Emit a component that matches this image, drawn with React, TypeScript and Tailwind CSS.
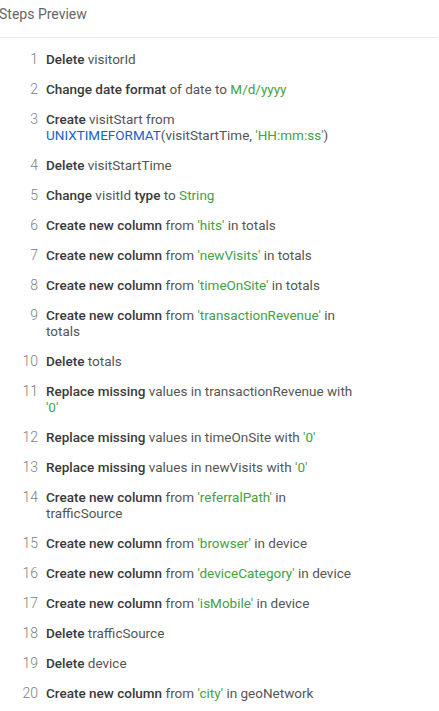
import React from 'react';

// ── Data ─────────────────────────────────────────────────────────────────────

type Part = { t: string; k?: 'op' | 'val' | 'fn' };

const steps: Part[][] = [
  [{ t: 'Delete', k: 'op' }, { t: ' visitorId' }],
  [{ t: 'Change date format', k: 'op' }, { t: ' of date to ' }, { t: 'M/d/yyyy', k: 'val' }],
  [
    { t: 'Create', k: 'op' },
    { t: ' visitStart from ' },
    { t: 'UNIXTIMEFORMAT', k: 'fn' },
    { t: '(visitStartTime, ' },
    { t: "'HH:mm:ss'", k: 'val' },
    { t: ')' },
  ],
  [{ t: 'Delete', k: 'op' }, { t: ' visitStartTime' }],
  [{ t: 'Change', k: 'op' }, { t: ' visitId ' }, { t: 'type', k: 'op' }, { t: ' to ' }, { t: 'String', k: 'val' }],
  [{ t: 'Create new column', k: 'op' }, { t: ' from ' }, { t: "'hits'", k: 'val' }, { t: ' in totals' }],
  [{ t: 'Create new column', k: 'op' }, { t: ' from ' }, { t: "'newVisits'", k: 'val' }, { t: ' in totals' }],
  [{ t: 'Create new column', k: 'op' }, { t: ' from ' }, { t: "'timeOnSite'", k: 'val' }, { t: ' in totals' }],
  [{ t: 'Create new column', k: 'op' }, { t: ' from ' }, { t: "'transactionRevenue'", k: 'val' }, { t: ' in totals' }],
  [{ t: 'Delete', k: 'op' }, { t: ' totals' }],
  [{ t: 'Replace missing', k: 'op' }, { t: ' values in transactionRevenue with ' }, { t: "'0'", k: 'val' }],
  [{ t: 'Replace missing', k: 'op' }, { t: ' values in timeOnSite with ' }, { t: "'0'", k: 'val' }],
  [{ t: 'Replace missing', k: 'op' }, { t: ' values in newVisits with ' }, { t: "'0'", k: 'val' }],
  [{ t: 'Create new column', k: 'op' }, { t: ' from ' }, { t: "'referralPath'", k: 'val' }, { t: ' in trafficSource' }],
  [{ t: 'Create new column', k: 'op' }, { t: ' from ' }, { t: "'browser'", k: 'val' }, { t: ' in device' }],
  [{ t: 'Create new column', k: 'op' }, { t: ' from ' }, { t: "'deviceCategory'", k: 'val' }, { t: ' in device' }],
  [{ t: 'Create new column', k: 'op' }, { t: ' from ' }, { t: "'isMobile'", k: 'val' }, { t: ' in device' }],
  [{ t: 'Delete', k: 'op' }, { t: ' trafficSource' }],
  [{ t: 'Delete', k: 'op' }, { t: ' device' }],
  [{ t: 'Create new column', k: 'op' }, { t: ' from ' }, { t: "'city'", k: 'val' }, { t: ' in geoNetwork' }],
];

const partClass = (k?: Part['k']) => {
  switch (k) {
    case 'op':
      return 'font-medium text-[#3a3a3a]';
    case 'val':
      return 'text-[#43a047]';
    case 'fn':
      return 'text-[#1a5fc8]';
    default:
      return 'text-[#555]';
  }
};

// ── Component ────────────────────────────────────────────────────────────────

export default function App() {
  return (
    <div className="w-[439px] h-[711px] bg-white overflow-hidden font-['Roboto',sans-serif]">
      {/* Header */}
      <div className="h-[38px] border-b border-[#e3eaf0] mr-px flex items-center -ml-[1px]">
        <span className="text-[14px] text-[#666] -mt-[8px]">Steps Preview</span>
      </div>

      {/* Steps */}
      <ol className="flex flex-col gap-[14px] pt-[13px]">
        {steps.map((parts, i) => (
          <li key={i} className="flex items-start">
            <span className="w-[39px] shrink-0 pr-[1px] text-right text-[14px] leading-4 text-[#808080] font-light">
              {i + 1}
            </span>
            <span className="ml-[7px] w-[314px] text-[13.5px] leading-4">
              {parts.map((p, j) => (
                <span key={j} className={partClass(p.k)}>
                  {p.t}
                </span>
              ))}
            </span>
          </li>
        ))}
      </ol>
    </div>
  );
}
